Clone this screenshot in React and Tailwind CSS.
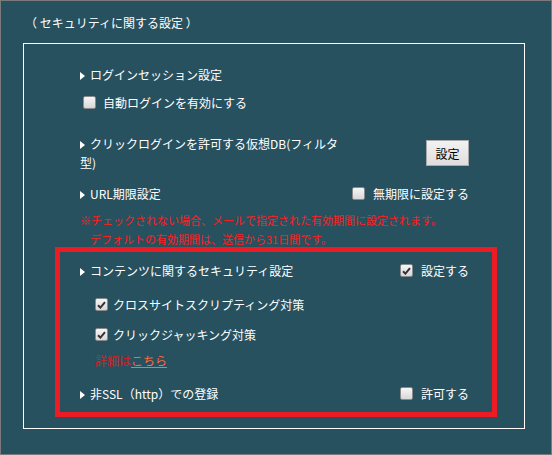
import React from 'react';

const Arrow = () => (
    <svg width="5" height="8" viewBox="0 0 5 8" className="inline-block mr-[5px] align-[0px]">
        <polygon points="0,0 5,4 0,8" fill="#ffffff" />
    </svg>
);

const Check = ({ checked }) => (
    <span className="inline-flex h-[13px] w-[13px] shrink-0 items-center justify-center rounded-[2px] border border-[#8a8a8a] bg-gradient-to-b from-[#f6f6f6] to-[#d8d8d8]">
        {checked && (
            <svg width="9" height="8" viewBox="0 0 9 8">
                <path d="M1 4.2 L3.4 6.6 L8 1.2" stroke="#333333" strokeWidth="2" fill="none" />
            </svg>
        )}
    </span>
);

const Option = ({ checked, label, gap = 'gap-[8px]' }) => (
    <label className={`flex items-center ${gap}`}>
        <Check checked={checked} />
        <span>{label}</span>
    </label>
);

const App = () => {
    return (
        <div
            className="h-[455px] w-[552px] border border-[#7a7a7a] bg-[#27515f] pl-[22px] pr-[26px] pt-[12px] pb-[25px] text-[12px] leading-[19px] text-white"
            style={{ fontFamily: '"Noto Sans CJK JP", "Noto Sans", sans-serif' }}
        >
            <p className="ml-[2px]">（ セキュリティに関する設定 ）</p>

            <div className="mt-[11px] border border-white pl-[31px] pr-[27px] pt-[21px] pb-[11px]">
                {/* ログインセッション */}
                <div className="px-[25px]">
                    <div><Arrow />ログインセッション設定</div>
                    <div className="mt-[9px] pl-[3px]">
                        <Option label="自動ログインを有効にする" gap="gap-[7px]" />
                    </div>
                </div>

                {/* クリックログイン */}
                <div className="mt-[22px] flex items-start justify-between pl-[25px] pr-[28px]">
                    <div className="w-[266px]"><Arrow />クリックログインを許可する仮想DB(フィルタ型)</div>
                    <button className="mt-[6px] h-[26px] w-[43px] border border-[#a9a9a9] bg-gradient-to-b from-[#f2f2f2] to-[#dedede] text-[12px] text-black">
                        設定
                    </button>
                </div>

                {/* URL期限 */}
                <div className="mt-[12px] flex items-center justify-between pl-[25px] pr-[28px]">
                    <div><Arrow />URL期限設定</div>
                    <Option label="無期限に設定する" />
                </div>
                <div className="mt-[8px] pl-[25px] text-[11px] leading-[19px] text-[#ff1e1e]">
                    <p>※チェックされない場合、メールで指定された有効期間に設定されます。</p>
                    <p className="pl-[10px]">デフォルトの有効期間は、送信から31日間です。</p>
                </div>

                {/* セキュリティ */}
                <div className="-mt-[2px] border-[5px] border-[#ed1c24] pl-[20px] pr-[23px] pt-[9px] pb-[9px]">
                    <div className="flex items-center justify-between">
                        <div><Arrow />コンテンツに関するセキュリティ設定</div>
                        <Option checked label="設定する" />
                    </div>
                    <div className="mt-[15px] pl-[15px]">
                        <Option checked label="クロスサイトスクリプティング対策" gap="gap-[5px]" />
                    </div>
                    <div className="mt-[11px] pl-[15px]">
                        <Option checked label="クリックジャッキング対策" gap="gap-[5px]" />
                    </div>
                    <div className="mt-[7px] pl-[15px] text-[#e8141e]">
                        詳細は<a href="#" className="text-[#ff6a3d] underline">こちら</a>
                    </div>
                    <div className="mt-[14px] flex items-center justify-between">
                        <div><Arrow />非SSL（http）での登録</div>
                        <Option label="許可する" />
                    </div>
                </div>
            </div>
        </div>
    );
};

export default App;
